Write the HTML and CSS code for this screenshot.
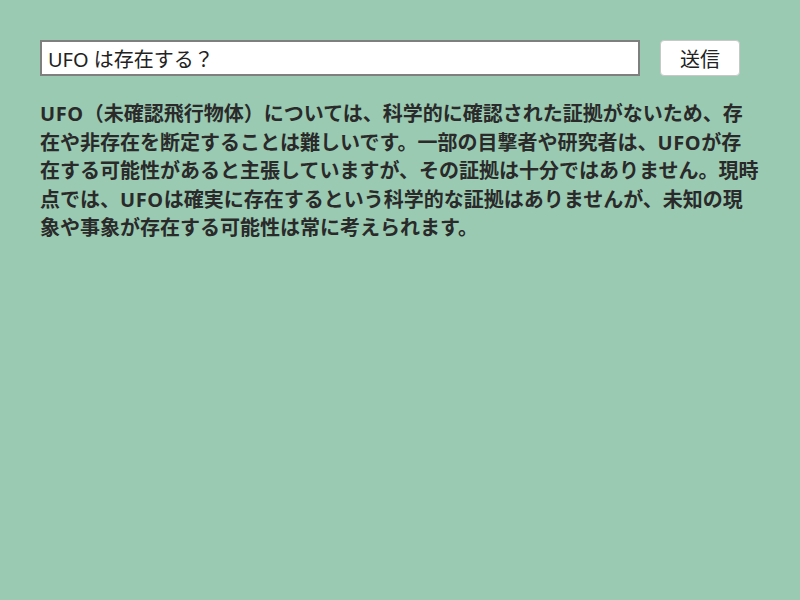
FILE: index.html
```html
<!DOCTYPE html>
<html lang="ja">
<head>
<meta charset="utf-8">
<link rel="stylesheet" href="styles.css">
</head>
<body>
<div class="page">
  <form class="ask">
    <input class="query" type="text" value="UFO は存在する？">
    <button class="send" type="button">送信</button>
  </form>
  <p class="answer"><span class="latin">UFO</span>（未確認飛行物体）については、科学的に確認された証拠がないため、存在や非存在を断定することは難しいです。一部の目撃者や研究者は、<span class="latin">UFO</span>が存在する可能性があると主張していますが、その証拠は十分ではありません。現時点では、<span class="latin">UFO</span>は確実に存在するという科学的な証拠はありませんが、未知の現象や事象が存在する可能性は常に考えられます。</p>
</div>
</body>
</html>
```

FILE: styles.css
```css
html, body {
  margin: 0;
  padding: 0;
  background: #9acab2;
  height: 100%;
}
body {
  font-family: "Noto Sans", "Noto Sans CJK JP", sans-serif;
}
.page {
  padding: 40px;
  width: 720px;
}
.ask {
  display: flex;
  gap: 20px;
  margin: 0;
}
.query {
  box-sizing: border-box;
  width: 600px;
  height: 36px;
  border: 2px solid #7f7f7f;
  background: #fff;
  padding: 0 6px;
  font-family: "Noto Sans", "Noto Sans CJK JP", sans-serif;
  font-size: 20px;
  color: #222;
  outline: none;
  margin: 0;
}
.send {
  box-sizing: border-box;
  width: 80px;
  height: 36px;
  border: 1px solid #c8c8c8;
  border-radius: 4px;
  background: #fff;
  font-family: "Noto Sans", "Noto Sans CJK JP", sans-serif;
  font-size: 20px;
  color: #222;
  padding: 0;
  margin: 0;
}
.answer {
  margin: 24px 0 0;
  font-size: 20px;
  font-weight: bold;
  line-height: 28.5px;
  color: #2a2a2a;
}
.latin {
  letter-spacing: 0.6px;
}
```
